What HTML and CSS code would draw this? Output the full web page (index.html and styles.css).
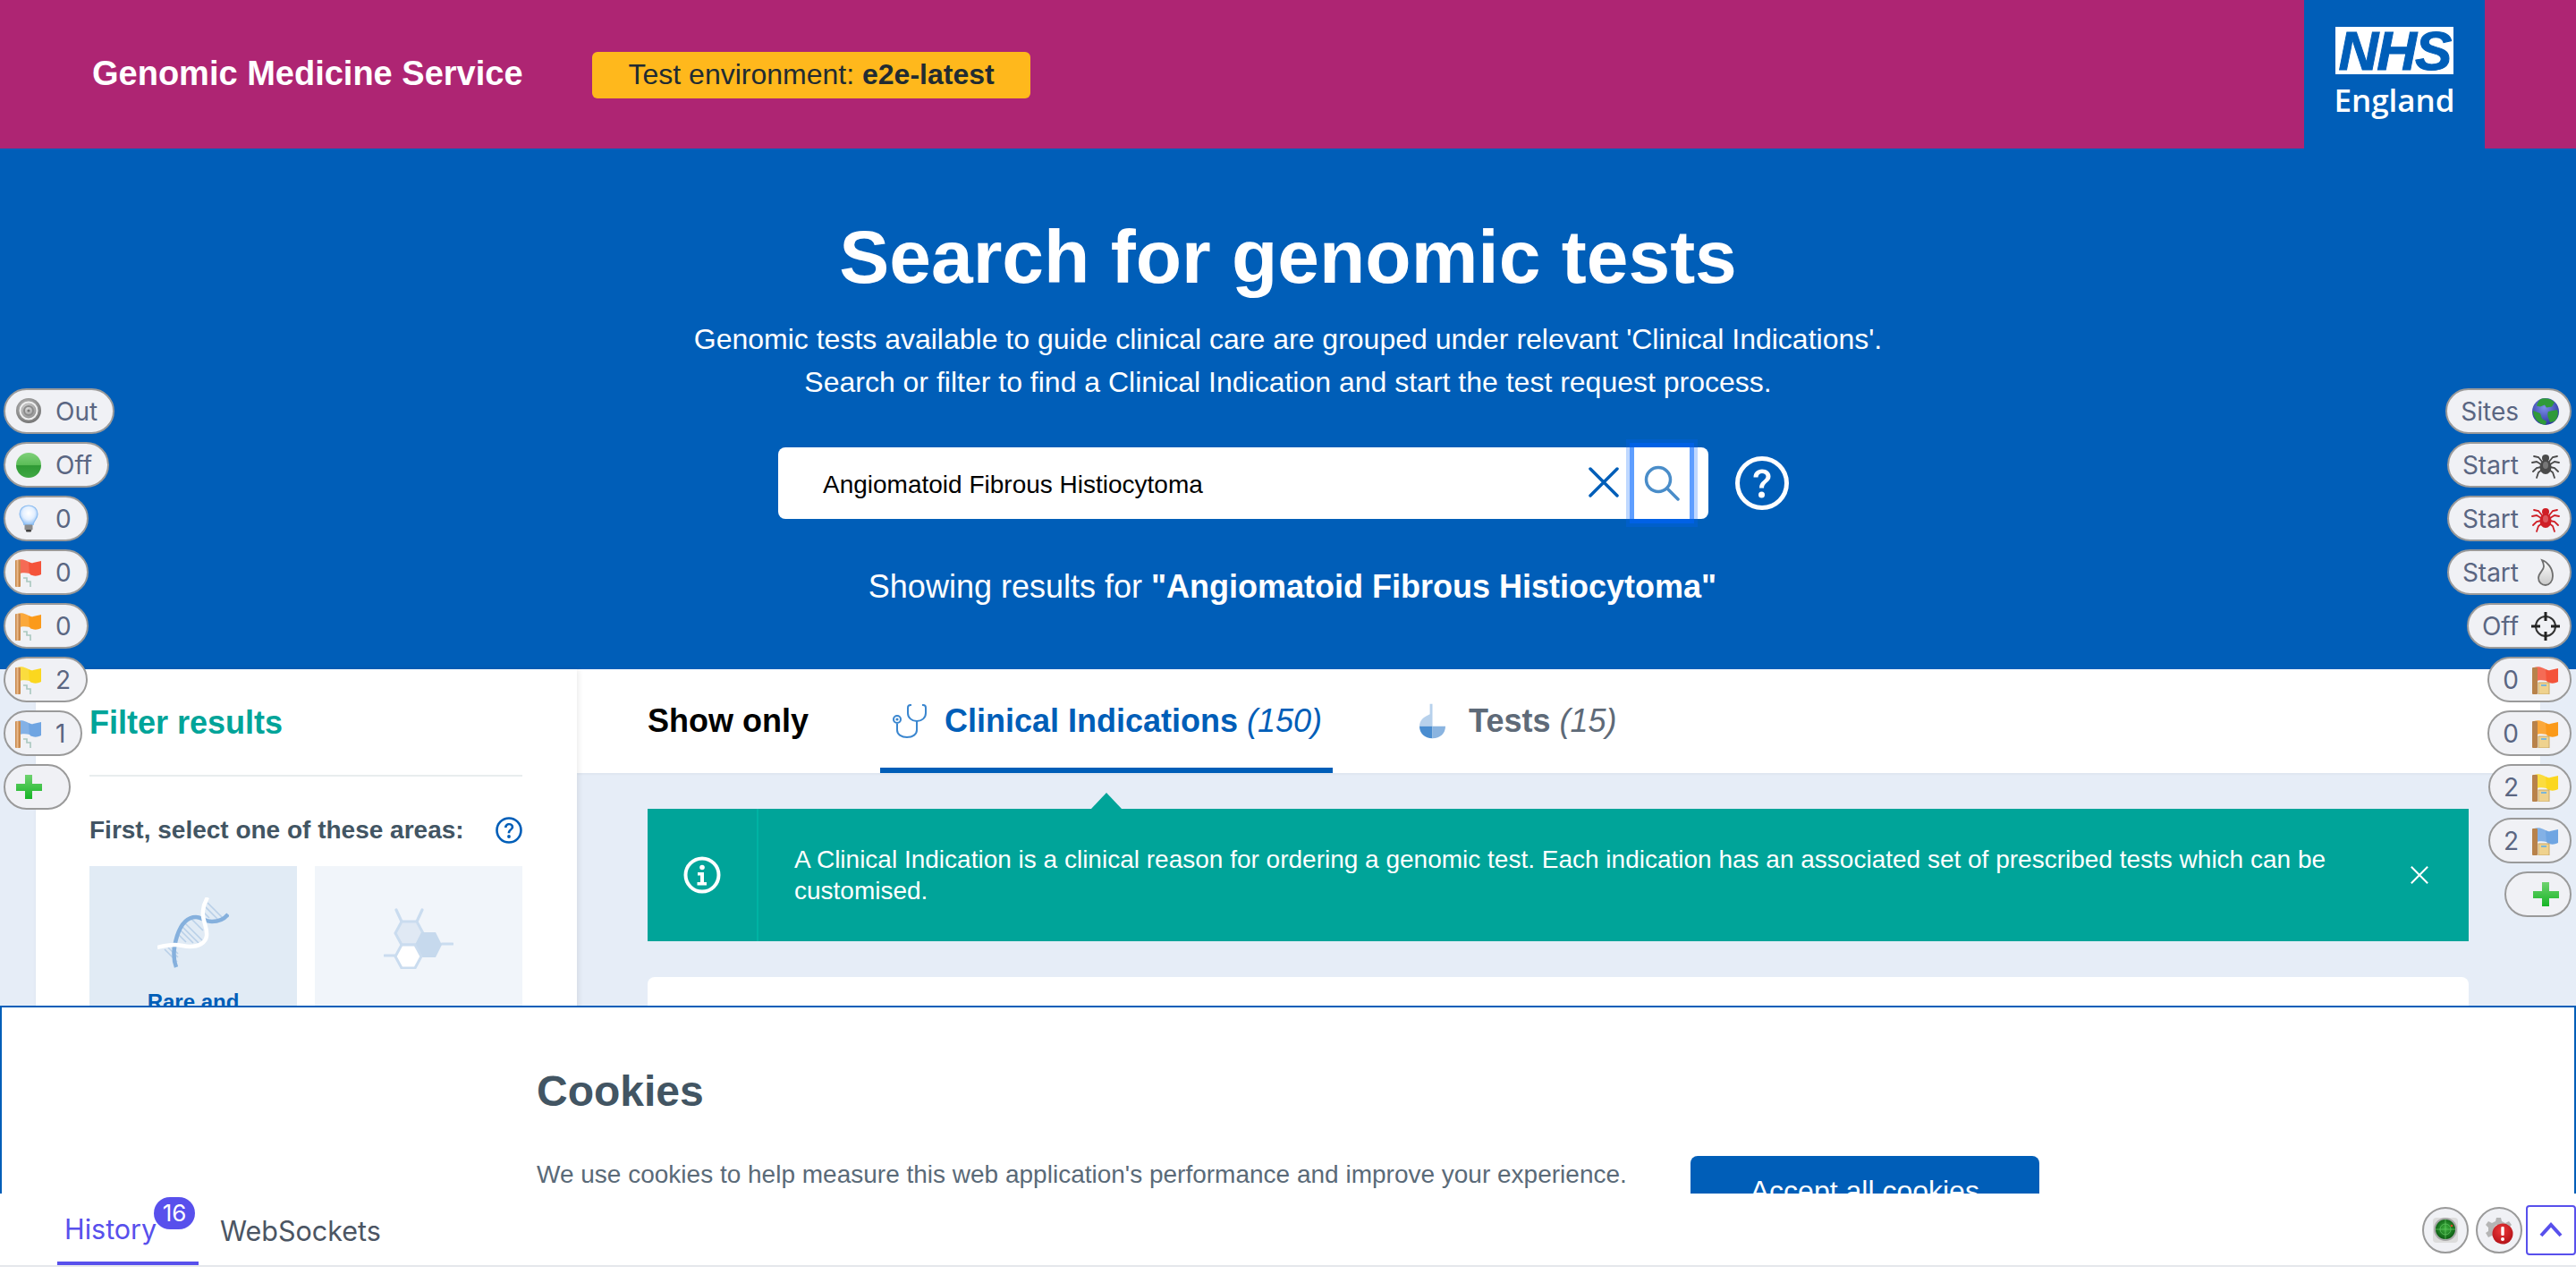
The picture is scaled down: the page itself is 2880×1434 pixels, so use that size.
FILE: index.html
```html
<!DOCTYPE html>
<html lang="en">
<head>
<meta charset="utf-8">
<title>Search for genomic tests</title>
<link rel="stylesheet" href="styles.css">
</head>
<body>
<svg class="sprite" aria-hidden="true">
  <defs>
    <radialGradient id="gTarget" cx=".45" cy=".4" r=".65"><stop offset="0" stop-color="#d8d8d8"/><stop offset="1" stop-color="#6c6c6c"/></radialGradient>
    <linearGradient id="gOff" x1="0" y1="0" x2="0" y2="1"><stop offset="0" stop-color="#7fd07a"/><stop offset=".48" stop-color="#5cbd58"/><stop offset=".52" stop-color="#2f9a35"/><stop offset="1" stop-color="#3fa844"/></linearGradient>
    <radialGradient id="gBulb" cx=".5" cy=".4" r=".6"><stop offset="0" stop-color="#ffffff"/><stop offset=".55" stop-color="#e4f0ff"/><stop offset="1" stop-color="#8fc0f5"/></radialGradient>
    <linearGradient id="gPlus" x1="0" y1="0" x2="0" y2="1"><stop offset="0" stop-color="#6fd26f"/><stop offset="1" stop-color="#16b526"/></linearGradient>
    <radialGradient id="gGlobe" cx=".45" cy=".35" r=".7"><stop offset="0" stop-color="#7c8fe8"/><stop offset="1" stop-color="#26309a"/></radialGradient>
    <radialGradient id="gRadar" cx=".5" cy=".45" r=".55"><stop offset="0" stop-color="#3fb23f"/><stop offset="1" stop-color="#0b5c12"/></radialGradient>
    <radialGradient id="gAlert" cx=".45" cy=".35" r=".7"><stop offset="0" stop-color="#ee3a3a"/><stop offset="1" stop-color="#b00f16"/></radialGradient>
    <linearGradient id="gDrop" x1="0" y1="0" x2="0" y2="1"><stop offset="0" stop-color="#ffffff"/><stop offset="1" stop-color="#c9c9c9"/></linearGradient>
  </defs>
  <symbol id="i-target" viewBox="0 0 32 32"><circle cx="16" cy="15" r="14" fill="url(#gTarget)"/><circle cx="16" cy="15" r="9.5" fill="none" stroke="#eeeeee" stroke-width="2"/><circle cx="16" cy="15" r="5" fill="none" stroke="#8a8a8a" stroke-width="2"/><circle cx="16" cy="15" r="1.6" fill="#777"/></symbol>
  <symbol id="i-off" viewBox="0 0 32 32"><circle cx="16" cy="16" r="14" fill="url(#gOff)"/></symbol>
  <symbol id="i-bulb" viewBox="0 0 32 32"><path d="M16 1c6 0 10 4 10 9.500 0 4-2.500 6-4 9-.6 1.200-.8 2-.8 3H10.800c0-1-.2-1.800-.8-3-1.500-3-4-5-4-9C6 5 10 1 16 1z" fill="url(#gBulb)" stroke="#8cbcf0" stroke-width="1.200"/><rect x="11.500" y="22.500" width="9" height="6" rx="1" fill="#8a8a8a"/><rect x="13" y="28" width="6" height="2.500" rx="1" fill="#3e3e3e"/></symbol>
  <symbol id="i-flag" viewBox="0 0 32 32"><path d="M3 2c6-2 9 0 13 2s5 1 5 1l9-2v15c-4 2-7 2-10 1s-2-1-3-2c-5-1-9-1-14 1z" fill="currentColor"/><path d="M3 2c6-2 9 0 13 2l1 15c-5-1-9-1-14 1z" fill="#fff" opacity=".14"/><rect x="1" y="2" width="6" height="30" rx="1" fill="#c98a4e"/><rect x="2.500" y="2" width="2" height="30" fill="#e9b98a"/><path d="M10 22h4v4h4v6" fill="none" stroke="#a9c7bf" stroke-width="1.600"/></symbol>
  <symbol id="i-flagdoc" viewBox="0 0 32 32"><path d="M3 2c6-2 9 0 13 2s5 1 5 1l9-2v15c-4 2-7 2-10 1s-2-1-3-2c-5-1-9-1-14 1z" fill="currentColor"/><path d="M3 2c6-2 9 0 13 2l1 15c-5-1-9-1-14 1z" fill="#fff" opacity=".14"/><rect x="1" y="2" width="6" height="30" rx="1" fill="#b8824a"/><rect x="8" y="19" width="12" height="13" fill="#efd28e" stroke="#c9a868" stroke-width="1"/><rect x="11" y="21" width="6" height="2" fill="#7cb6d8"/></symbol>
  <symbol id="i-plus" viewBox="0 0 32 32"><path d="M12 2h8v10h11v8H20v9h-8v-9H2v-8h10z" fill="url(#gPlus)"/></symbol>
  <symbol id="i-globe" viewBox="0 0 32 32"><circle cx="16" cy="16" r="15" fill="url(#gGlobe)"/><path d="M12 1.500c5-1 10 0 14 4l-3 5-6 1-2-3-5 2-4-1c1-4 3-7 6-8zM19 16l10-2c2 5 0 10-3 13l-5 1c-1-3-4-8-2-12zM2 15l8 3 2 6 5 3-1 4C8 30 2 23 2 15z" fill="#2f9a3a"/></symbol>
  <symbol id="i-spider" viewBox="0 0 32 32"><g fill="none" stroke="currentColor" stroke-width="1.800" stroke-linecap="round"><path d="M12 12 8 7 3 6M11 15 6 12 1 13M11 18l-5 1-4 4M12 21l-4 3-2 6M20 12l4-5 5-1M21 15l5-3 5 1M21 18l5 1 4 4M20 21l4 3 2 6"/></g><circle cx="16" cy="8" r="4" fill="currentColor"/><ellipse cx="16" cy="18" rx="6.500" ry="8" fill="currentColor"/><ellipse cx="16" cy="16" rx="3" ry="4" fill="#fff" opacity=".25"/></symbol>
  <symbol id="i-drop" viewBox="0 0 32 32"><path d="M12 2c6 2 12 9 12 18 0 6-4 10-8 10s-8-3-8-8c0-6 6-8 6-13 0-3-1-5-2-7z" fill="url(#gDrop)" stroke="#6f6f6f" stroke-width="1.800"/></symbol>
  <symbol id="i-cross" viewBox="0 0 32 32"><circle cx="16" cy="16" r="11" fill="none" stroke="#333" stroke-width="2"/><path d="M16 0v10M16 22v10M0 16h10M22 16h10" stroke="#222" stroke-width="3"/></symbol>
  <symbol id="i-dna" viewBox="0 0 80 80"><g stroke="#b9d0e8" stroke-width="1.600"><path d="M56 6 72 22M53 10l14 14M50 15l8 8M30 28l20 20M26 31l20 20M24 35l16 16M38 24l13 13M24 42l8 8M8 58l14 14M12 56l11 11M16 56l7 7"/></g><path d="M21 78c-4-10-3-22 1-35 4-12 10-21 21-21 6 0 10 5 18 5 8 0 14-3 18-8" fill="none" stroke="#85b0dd" stroke-width="4.500"/><path d="M56 0c-4 7-6 13-5 21 1 8 5 14 4 22-1 8-9 12-19 12-6 0-10-2-17-2-8 0-15 2-19 3" fill="none" stroke="#fff" stroke-width="4.500"/></symbol>
  <symbol id="i-hex" viewBox="0 0 78 68"><g fill="none" stroke="#cadcef" stroke-width="3.200" stroke-linecap="round"><path d="M14 2l6 13M43 2l-6 13M65 40h12M1 53h13"/></g><path d="M20 15h17l7 13-7 13H20l-7-13z" fill="#e0e9f4" stroke="#cadcef" stroke-width="3"/><path d="M42 27h16l7 14-7 14H42l-7-14z" fill="#c6d9ed"/><path d="M20 41h15l7 13-7 13H20l-7-13z" fill="#fff" stroke="#cadcef" stroke-width="3"/></symbol>
</svg>

<header class="topbar">
  <div class="service">Genomic Medicine Service</div>
  <div class="envbadge">Test environment: <b>e2e-latest</b></div>
  <div class="nhsblock">
    <div class="nhsmark">NHS</div>
    <div class="nhsname">England</div>
  </div>
</header>

<section class="hero">
  <h1 class="hero-title">Search for genomic tests</h1>
  <p class="hero-copy">Genomic tests available to guide clinical care are grouped under relevant 'Clinical Indications'.<br>Search or filter to find a Clinical Indication and start the test request process.</p>
  <div class="searchrow">
    <div class="searchbox">
      <span class="searchtext">Angiomatoid Fibrous Histiocytoma</span>
      <svg class="clearicon" viewBox="0 0 34 34"><path d="M2 2l30 30M32 2L2 32" stroke="#005eb8" stroke-width="3.500" stroke-linecap="round"/></svg>
      <div class="searchbtn"><svg class="magicon" viewBox="0 0 40 40"><circle cx="16" cy="16" r="13.500" fill="none" stroke="#4a8dc9" stroke-width="3.500"/><path d="M26 26l12 12" stroke="#4a8dc9" stroke-width="3.500" stroke-linecap="round"/></svg></div>
    </div>
    <svg class="helpbig" viewBox="0 0 60 60"><circle cx="30" cy="30" r="27.500" fill="none" stroke="#fff" stroke-width="5"/><path d="M20.500 23.500c0-5.500 4-9 9.500-9s9.500 3.500 9.500 8c0 6.500-7.500 6.500-7.500 13h-5c0-8 7.500-8.500 7.500-13 0-2-2-3.500-4.500-3.500s-4.500 1.800-4.500 4.500z" fill="#fff"/><circle cx="29.500" cy="43" r="3.500" fill="#fff"/></svg>
  </div>
  <p class="showing">Showing results for <b>"Angiomatoid Fibrous Histiocytoma"</b></p>
</section>

<main class="content">
  <aside class="sidebar">
    <h2 class="filter-title">Filter results</h2>
    <hr class="filter-rule">
    <div class="areas-head">
      <span>First, select one of these areas:</span>
      <svg class="helpsmall" viewBox="0 0 30 30"><circle cx="15" cy="15" r="13.500" fill="none" stroke="#005eb8" stroke-width="2.600"/><path d="M10 12c0-3 2.200-5 5.200-5s5 1.800 5 4.200c0 3.500-4 3.500-4 7h-2.600c0-4.300 4-4.600 4-7 0-1.100-1-1.900-2.400-1.900s-2.500 1-2.500 2.700z" fill="#005eb8"/><circle cx="15" cy="22" r="1.900" fill="#005eb8"/></svg>
    </div>
    <div class="areas">
      <div class="area area-on">
        <svg class="area-dna"><use href="#i-dna"/></svg>
        <div class="area-label">Rare and inherited disease</div>
      </div>
      <div class="area area-off">
        <svg class="area-hex"><use href="#i-hex"/></svg>
      </div>
    </div>
  </aside>
  <div class="results">
    <nav class="tabs">
      <span class="tabs-label">Show only</span>
      <div class="tab tab-active">
        <svg class="tab-steth" viewBox="0 0 38 40"><g fill="none" stroke="#3a86cf" stroke-width="2"><path d="M21 2h-1c-2 0-3 1-3 3v6c0 5 4 9 10 9s10-4 10-9V5c0-2-1-3-3-3h-1"/><path d="M27 20v10c0 5-5 8-11 8S5 35 5 30v-7"/><circle cx="5" cy="18" r="4"/></g><circle cx="5" cy="18" r="1.600" fill="#3a86cf"/></svg>
        <span class="tab-name">Clinical Indications</span><i class="tab-count">(150)</i>
      </div>
      <div class="tab tab-idle">
        <svg class="tab-tube" viewBox="0 0 30 40"><path d="M12 0h3v26H0c0-7 5-11 12-14z" fill="#b7d1ec"/><path d="M0 26h15v14C6 40 0 34 0 26z" fill="#4a8dd0"/><path d="M15 26h15c0 8-6 14-15 14z" fill="#8ab4e0"/></svg>
        <span class="tab-name">Tests</span><i class="tab-count">(15)</i>
      </div>
    </nav>
    <div class="panel">
      <div class="notice">
        <div class="notice-icon">
          <svg class="infoicon" viewBox="0 0 42 42"><circle cx="21" cy="21" r="18.500" fill="none" stroke="#fff" stroke-width="4"/><circle cx="21" cy="12.500" r="2.800" fill="#fff"/><path d="M16 18h7v11h3v3.500H15.500V29H19v-7.500h-3z" fill="#fff"/></svg>
        </div>
        <div class="notice-text">A Clinical Indication is a clinical reason for ordering a genomic test. Each indication has an associated set of prescribed tests which can be customised.</div>
        <div class="notice-close"><svg class="closeicon" viewBox="0 0 24 24"><path d="M2 2l20 20M22 2L2 22" stroke="#fff" stroke-width="2.200"/></svg></div>
      </div>
      <div class="result-card"></div>
    </div>
  </div>
</main>

<div class="hud hud-left">
  <div class="pill"><svg class="pill-ico"><use href="#i-target"/></svg><span>Out</span></div>
  <div class="pill"><svg class="pill-ico"><use href="#i-off"/></svg><span>Off</span></div>
  <div class="pill"><svg class="pill-ico"><use href="#i-bulb"/></svg><span>0</span></div>
  <div class="pill"><svg class="pill-ico fl-red"><use href="#i-flag"/></svg><span>0</span></div>
  <div class="pill"><svg class="pill-ico fl-orange"><use href="#i-flag"/></svg><span>0</span></div>
  <div class="pill"><svg class="pill-ico fl-yellow"><use href="#i-flag"/></svg><span>2</span></div>
  <div class="pill"><svg class="pill-ico fl-blue"><use href="#i-flag"/></svg><span>1</span></div>
  <div class="pill pill-plus"><svg class="pill-ico"><use href="#i-plus"/></svg></div>
</div>
<div class="hud hud-right">
  <div class="pill"><span>Sites</span><svg class="pill-ico"><use href="#i-globe"/></svg></div>
  <div class="pill"><span>Start</span><svg class="pill-ico sp-black"><use href="#i-spider"/></svg></div>
  <div class="pill"><span>Start</span><svg class="pill-ico sp-red"><use href="#i-spider"/></svg></div>
  <div class="pill"><span>Start</span><svg class="pill-ico"><use href="#i-drop"/></svg></div>
  <div class="pill"><span>Off</span><svg class="pill-ico"><use href="#i-cross"/></svg></div>
  <div class="pill"><span>0</span><svg class="pill-ico fl-red"><use href="#i-flagdoc"/></svg></div>
  <div class="pill"><span>0</span><svg class="pill-ico fl-orange"><use href="#i-flagdoc"/></svg></div>
  <div class="pill"><span>2</span><svg class="pill-ico fl-yellow"><use href="#i-flagdoc"/></svg></div>
  <div class="pill"><span>2</span><svg class="pill-ico fl-blue"><use href="#i-flagdoc"/></svg></div>
  <div class="pill pill-plus"><svg class="pill-ico"><use href="#i-plus"/></svg></div>
</div>

<section class="cookies">
  <h2 class="cookies-title">Cookies</h2>
  <div class="cookies-row">
    <p class="cookies-copy">We use cookies to help measure this web application's performance and improve your experience.</p>
    <div class="cookies-btn">Accept all cookies</div>
  </div>
</section>

<footer class="drawer">
  <div class="drawer-tab drawer-tab-on">History<span class="drawer-badge">16</span></div>
  <div class="drawer-tab">WebSockets</div>
  <div class="drawer-tools">
    <div class="roundbtn"><svg class="roundico" viewBox="0 0 32 32"><rect x="2" y="2" width="28" height="28" rx="4" fill="#dcdcdc"/><circle cx="16" cy="15" r="13" fill="#a8a8a8"/><circle cx="16" cy="15" r="11" fill="url(#gRadar)"/><path d="M16 4v22M5 15h22" stroke="#5fc45f" stroke-width=".8"/><circle cx="16" cy="15" r="6" fill="none" stroke="#5fc45f" stroke-width=".8"/><circle cx="23" cy="11" r="1.300" fill="#e0402a"/></svg></div>
    <div class="roundbtn"><svg class="roundico" viewBox="0 0 32 32"><path d="M13 2h5l1 4 4 2 4-2 3 4-3 3v4l3 2-3 5-4-2-4 3-1 4h-5l-1-4-4-3-4 2-3-5 3-2v-4L1 10l3-4 4 2 4-2z" fill="#b5b5b5"/><circle cx="15" cy="15" r="5" fill="#eee"/><circle cx="20" cy="20" r="11.500" fill="url(#gAlert)"/><rect x="18.300" y="12" width="3.400" height="10" rx="1" fill="#fff"/><circle cx="20" cy="26" r="2" fill="#fff"/></svg></div>
    <div class="chevbtn"><svg class="chevico" viewBox="0 0 26 18"><path d="M2 15L13 3l11 12" fill="none" stroke="#5850ec" stroke-width="4"/></svg></div>
  </div>
</footer>
</body>
</html>
```
FILE: styles.css
```css
* { box-sizing: border-box; }
html, body { margin: 0; height: 100%; }
body {
  position: relative;
  width: 2880px;
  height: 1434px;
  overflow: hidden;
  background: #e6edf7;
  font-family: "Liberation Sans", Arial, sans-serif;
}
.sprite { position: absolute; width: 0; height: 0; }

/* top bar */
.topbar {
  display: flex;
  align-items: center;
  height: 166px;
  padding: 0 102px 0 103px;
  background: #ae2573;
  color: #fff;
}
.service { margin-top: -2px; font-size: 38px; font-weight: 700; }
.envbadge {
  margin-left: 77px;
  width: 490px;
  height: 52px;
  margin-top: 2px;
  padding-left: 41px;
  border-radius: 6px;
  background: #ffb81c;
  color: #212b32;
  font-size: 32px;
  line-height: 50px;
}
.nhsblock {
  display: flex;
  flex-direction: column;
  align-items: center;
  width: 202px;
  height: 166px;
  margin-left: auto;
  padding-top: 30px;
  background: #005eb8;
}
.nhsmark {
  width: 132px;
  height: 53px;
  background: #fff;
  color: #005eb8;
  font-size: 62px;
  font-style: italic;
  font-weight: 700;
  line-height: 54px;
  letter-spacing: -2px;
  text-align: center;
  -webkit-text-stroke: 1px #005eb8;
}
.nhsname {
  margin-top: 5px;
  font-family: "Open Sans", sans-serif;
  font-size: 35px;
  font-weight: 600;
  line-height: 48px;
}

/* hero */
.hero {
  height: 582px;
  padding-top: 71px;
  background: #005eb8;
  color: #fff;
  text-align: center;
}
.hero-title {
  margin: 0 0 18px;
  font-size: 84px;
  font-weight: 700;
  line-height: 100px;
}
.hero-copy {
  margin: 0 0 49px;
  font-size: 32px;
  line-height: 48px;
}
.searchrow {
  display: flex;
  justify-content: center;
  align-items: center;
  gap: 30px;
  padding-right: 10px;
}
.searchbox {
  display: flex;
  align-items: center;
  width: 1040px;
  height: 80px;
  padding: 0 21px 0 50px;
  border-radius: 8px;
  background: #fff;
}
.searchtext { flex: 1; margin-top: 4px; color: #000; font-size: 28px; text-align: left; }
.clearicon { width: 34px; height: 34px; margin-right: 17px; margin-bottom: 2px; }
.searchbtn {
  display: flex;
  align-items: center;
  justify-content: center;
  width: 62px;
  height: 80px;
  box-shadow: 0 0 0 5px rgba(0, 100, 255, .5), 0 0 0 9px rgba(0, 100, 255, .25);
}
.magicon { width: 40px; height: 40px; }
.helpbig { width: 60px; height: 60px; }
.showing {
  margin: 52px 0 0;
  padding-left: 10px;
  font-size: 36px;
  line-height: 48px;
}

/* body */
.content {
  display: flex;
  height: 700px;
  padding: 0 40px;
}
.sidebar {
  position: relative;
  z-index: 1;
  flex: 0 0 605px;
  padding: 38px 61px 0 60px;
  background: #fff;
  box-shadow: 2px 0 6px rgba(0, 0, 0, .08);
}
.filter-title {
  margin: 0;
  color: #00a499;
  font-size: 36px;
  font-weight: 700;
  line-height: 44px;
}
.filter-rule {
  height: 2px;
  margin: 36px 0 0;
  border: 0;
  background: #e8edee;
}
.areas-head {
  display: flex;
  align-items: center;
  justify-content: space-between;
  height: 36px;
  margin-top: 42px;
  color: #425563;
  font-size: 28px;
  font-weight: 700;
}
.helpsmall { width: 30px; height: 30px; }
.areas {
  display: grid;
  grid-template-columns: 1fr 1fr;
  gap: 20px;
  margin-top: 22px;
}
.area { height: 300px; padding-top: 35px; text-align: center; }
.area-on { background: #e1ebf5; }
.area-off { background: #f1f5fa; }
.area-dna { display: block; width: 80px; height: 80px; margin: 0 auto; }
.area-hex { display: block; width: 78px; height: 68px; margin: 12px auto 0; }
.area-label {
  margin-top: 22px;
  padding: 0 20px;
  color: #005eb8;
  font-size: 24px;
  font-weight: 700;
  line-height: 30px;
}
.results { flex: 1; min-width: 0; }
.tabs {
  display: flex;
  height: 116px;
  padding-left: 79px;
  background: #fff;
  box-shadow: 0 2px 2px rgba(0, 0, 0, .03);
  font-size: 36px;
}
.tabs-label {
  align-self: center;
  width: 260px;
  color: #000;
  font-weight: 700;
}
.tab {
  display: flex;
  align-items: center;
  height: 116px;
  padding: 6px 12px 0 14px;
  border-bottom: 6px solid transparent;
}
.tab-active { border-bottom-color: #005eb8; color: #005eb8; }
.tab-idle { margin-left: 83px; color: #5e6a78; }
.tab-name { font-weight: 700; }
.tab-count { margin-left: 10px; font-weight: 400; }
.tab-steth { width: 38px; height: 40px; margin-right: 20px; }
.tab-tube { width: 29px; height: 40px; margin-right: 26px; }
.panel { height: 584px; padding: 40px 80px 0 79px; }
.notice {
  position: relative;
  display: flex;
  align-items: center;
  height: 148px;
  background: #00a499;
  color: #fff;
}
.notice::before {
  content: "";
  position: absolute;
  top: -18px;
  left: 496px;
  border-style: solid;
  border-width: 0 17px 18px;
  border-color: transparent transparent #00a499;
}
.notice-icon {
  display: flex;
  align-items: center;
  justify-content: center;
  flex: 0 0 124px;
  height: 100%;
  border-right: 2px solid #00b3a4;
}
.infoicon { width: 42px; height: 42px; }
.notice-text {
  flex: 1;
  padding-left: 40px;
  font-size: 28px;
  line-height: 35px;
}
.notice-close {
  display: flex;
  align-items: center;
  justify-content: center;
  flex: 0 0 110px;
}
.closeicon { width: 22px; height: 22px; }
.result-card {
  height: 300px;
  margin-top: 40px;
  border-radius: 8px;
  background: #fff;
}

/* HUD pills (overlay) */
.hud {
  position: absolute;
  z-index: 2;
  top: 434px;
  display: flex;
  flex-direction: column;
  gap: 9px;
}
.hud-left { left: 4px; align-items: flex-start; }
.hud-right { right: 5px; align-items: flex-end; }
.pill {
  display: flex;
  align-items: center;
  height: 51px;
  border: 2px solid #9a9a9a;
  border-radius: 26px;
  background: #f0f1f5;
  color: #5a6682;
  font-family: Inter, sans-serif;
  font-size: 28px;
}
.hud-left .pill { padding: 0 17px 0 10px; gap: 14px; }
.hud-right .pill { padding: 0 11px 0 15px; gap: 14px; }
.pill-plus { min-width: 75px; }
.hud-right .pill-plus { justify-content: flex-end; }
.pill-ico { width: 32px; height: 32px; }
.fl-red { color: #f4533a; }
.fl-orange { color: #fb9a1a; }
.fl-yellow { color: #fbd71f; }
.fl-blue { color: #6fa5e2; }
.sp-black { color: #4a4a4a; }
.sp-red { color: #cf1f26; }

/* cookie banner (overlay) */
.cookies {
  position: absolute;
  z-index: 3;
  top: 1124px;
  left: 0;
  right: 0;
  height: 210px;
  padding: 66px 0 0 598px;
  overflow: hidden;
  border: 2px solid #005eb8;
  border-bottom: 0;
  background: #fff;
}
.cookies-title {
  margin: 0 0 44px;
  color: #425563;
  font-size: 48px;
  font-weight: 700;
  line-height: 56px;
}
.cookies-row { display: flex; align-items: flex-start; gap: 71px; }
.cookies-copy {
  margin: 0;
  color: #5a6a78;
  font-size: 28px;
  line-height: 42px;
  white-space: nowrap;
}
.cookies-btn {
  flex: 0 0 390px;
  height: 90px;
  padding-top: 19px;
  border-radius: 8px;
  background: #005eb8;
  color: #fff;
  font-size: 32px;
  line-height: 40px;
  text-align: center;
}

/* drawer (overlay) */
.drawer {
  position: absolute;
  z-index: 3;
  top: 1334px;
  left: 0;
  right: 0;
  display: flex;
  align-items: stretch;
  height: 100px;
  padding: 0 0 18px 64px;
  background: #fff;
  font-family: Inter, sans-serif;
  font-size: 30.500px;
  color: #4b5563;
}
.drawer::after {
  content: "";
  position: absolute;
  left: 0;
  right: 0;
  bottom: 18px;
  height: 2px;
  background: #e5e7eb;
}
.drawer-tab {
  position: relative;
  display: flex;
  align-items: center;
  height: 80px;
  padding: 2px 9px 0 8px;
  margin-right: 16px;
}
.drawer-tab-on {
  width: 158px;
  border-bottom: 4px solid #5850ec;
  color: #5850ec;
}
.drawer-badge {
  position: absolute;
  top: 4px;
  left: 108px;
  width: 46px;
  height: 36px;
  border-radius: 18px;
  background: #5850ec;
  color: #fff;
  font-size: 26px;
  line-height: 36px;
  text-align: center;
}
.drawer-tools {
  display: flex;
  align-items: center;
  gap: 8px;
  margin-left: auto;
}
.roundbtn {
  display: flex;
  align-items: center;
  justify-content: center;
  width: 52px;
  height: 52px;
  border: 2px solid #9a9a9a;
  border-radius: 50%;
  background: #f0f1f5;
}
.roundico { width: 32px; height: 32px; }
.chevbtn {
  display: flex;
  align-items: center;
  justify-content: center;
  width: 56px;
  height: 56px;
  margin-left: -4px;
  border: 2px solid #5850ec;
  border-radius: 4px;
  background: #fff;
}
.chevico { width: 26px; height: 18px; }
```
